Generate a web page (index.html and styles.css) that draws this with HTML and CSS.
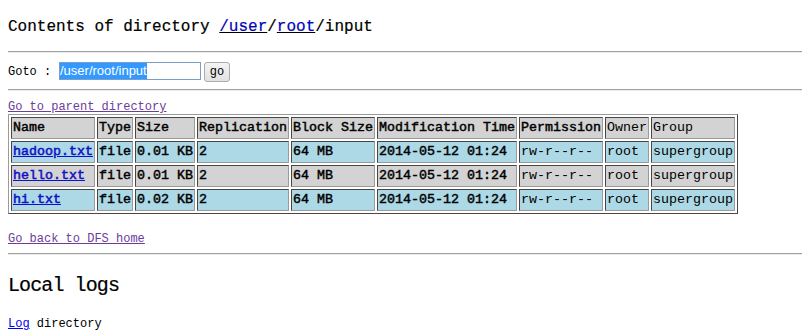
FILE: index.html
```html
<!DOCTYPE html>
<html lang="en">
  <head>
    <meta charset="UTF-8" />
    <title>HDFS:/user/root/input</title>
    <link rel="stylesheet" href="styles.css">
  </head>
  <body>
    <h3 class="dir-title">
      Contents of directory <a href="#">/user</a>/<a href="#">root</a>/input
    </h3>
    <hr class="rule" />

    <form class="goto" onsubmit="return false">
      <span class="goto-label">Goto :</span>
      <div class="goto-field"><span class="goto-sel">/user/root/input</span></div>
      <button type="submit">go</button>
    </form>
    <hr class="rule rule-mid" />

    <div class="small-line up-link"><a class="seen" href="#">Go to parent directory</a></div>
    <table class="listing">
      <tr class="row-head">
        <td class="b">Name</td>
        <td class="b">Type</td>
        <td class="b">Size</td>
        <td class="b">Replication</td>
        <td class="b">Block Size</td>
        <td class="b">Modification Time</td>
        <td class="b">Permission</td>
        <td>Owner</td>
        <td>Group</td>
      </tr>
      <tr class="row-normal">
        <td><a class="file-link" href="#">hadoop.txt</a></td>
        <td class="b">file</td>
        <td class="b">0.01 KB</td>
        <td class="b">2</td>
        <td class="b">64 MB</td>
        <td class="b">2014-05-12 01:24</td>
        <td>rw-r--r--</td>
        <td>root</td>
        <td>supergroup</td>
      </tr>
      <tr class="row-alt">
        <td><a class="file-link" href="#">hello.txt</a></td>
        <td class="b">file</td>
        <td class="b">0.01 KB</td>
        <td class="b">2</td>
        <td class="b">64 MB</td>
        <td class="b">2014-05-12 01:24</td>
        <td>rw-r--r--</td>
        <td>root</td>
        <td>supergroup</td>
      </tr>
      <tr class="row-normal">
        <td><a class="file-link" href="#">hi.txt</a></td>
        <td class="b">file</td>
        <td class="b">0.02 KB</td>
        <td class="b">2</td>
        <td class="b">64 MB</td>
        <td class="b">2014-05-12 01:24</td>
        <td>rw-r--r--</td>
        <td>root</td>
        <td>supergroup</td>
      </tr>
    </table>

    <div class="small-line back-link"><a class="seen" href="#">Go back to DFS home</a></div>
    <hr class="rule rule-mid" />

    <h2 class="logs-title">Local logs</h2>
    <div class="small-line log-line"><a href="#">Log</a> directory</div>
  </body>
</html>
```

FILE: styles.css
```css
body {
  margin: 0;
  padding: 8px;
  font-family: "Liberation Mono", monospace;
  color: #000;
  background: #fff;
}

a {
  color: #0000ee;
}

a.seen {
  color: #6b3d9a;
}

.dir-title {
  margin: 9px 0 14px;
  font-size: 16px;
  line-height: 20px;
  font-weight: normal;
  -webkit-text-stroke: 0.2px #000;
}

.rule {
  margin: 0 -8px 0 0;
  height: 0;
  border: none;
  border-top: 1px solid #a0a0a0;
  border-bottom: 1px solid #ebebeb;
}

.rule-mid {
  margin-top: 7px;
}

.goto {
  display: flex;
  align-items: center;
  height: 20px;
  margin: 9px 0 0;
}

.goto-label {
  font-size: 12px;
  line-height: 14px;
  width: 51px;
}

.goto-field {
  display: flex;
  align-items: center;
  width: 140px;
  height: 16px;
  border: 1px solid #7b9ec9;
  align-self: flex-start;
}

.goto-sel {
  font-family: "Liberation Sans", Arial, sans-serif;
  font-size: 13px;
  line-height: 16px;
  background: #3399ff;
  color: #fff;
}

.goto button {
  margin-left: 3px;
  width: 26px;
  height: 20px;
  padding: 0;
  font-family: "Liberation Mono", monospace;
  font-size: 12px;
  color: #000;
  background: linear-gradient(#f4f4f4, #e2e2e2);
  border: 1px solid #acacac;
  border-radius: 3px;
}

.small-line {
  font-size: 12px;
  line-height: 14px;
}

.up-link {
  margin-top: 9px;
}

.listing {
  border: 1px outset #9a9a9a;
  border-spacing: 2px;
  font-size: 13.33px;
  line-height: 18px;
}

.listing td {
  border: 1px inset #9a9a9a;
  padding: 1px;
  white-space: nowrap;
  text-align: left;
}

.listing .b {
  -webkit-text-stroke: 0.45px #000;
}

.row-head,
.row-alt {
  background-color: #d3d3d3;
}

.row-normal {
  background-color: #add8e6;
}

.file-link {
  color: #1010c8;
  -webkit-text-stroke: 0.5px #1010c8;
}

.back-link {
  margin-top: 18px;
}

.logs-title {
  margin: 19px 0 0;
  font-size: 20px;
  line-height: 24px;
  letter-spacing: -0.9px;
  font-weight: normal;
  -webkit-text-stroke: 0.2px #000;
}

.log-line {
  margin-top: 19px;
}
```
